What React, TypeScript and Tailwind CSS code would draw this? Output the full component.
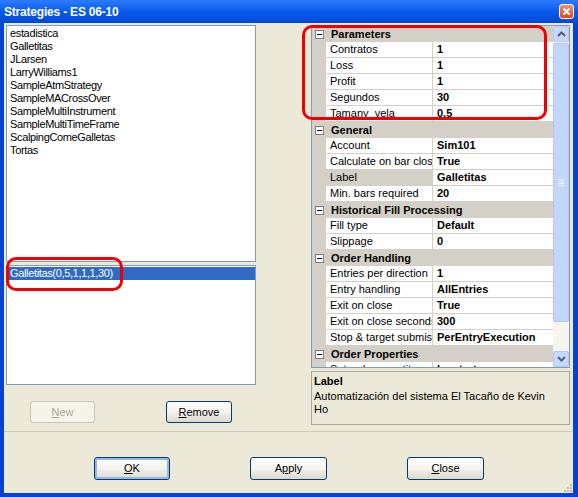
import React from "react";

type GridRow =
  | { kind: "cat"; label: string }
  | { kind: "prop"; name: string; value: string; selected?: boolean };

const strategies = [
  "estadistica",
  "Galletitas",
  "JLarsen",
  "LarryWilliams1",
  "SampleAtmStrategy",
  "SampleMACrossOver",
  "SampleMultiInstrument",
  "SampleMultiTimeFrame",
  "ScalpingComeGalletas",
  "Tortas",
];

const rows: GridRow[] = [
  { kind: "cat", label: "Parameters" },
  { kind: "prop", name: "Contratos", value: "1" },
  { kind: "prop", name: "Loss", value: "1" },
  { kind: "prop", name: "Profit", value: "1" },
  { kind: "prop", name: "Segundos", value: "30" },
  { kind: "prop", name: "Tamany_vela", value: "0,5" },
  { kind: "cat", label: "General" },
  { kind: "prop", name: "Account", value: "Sim101" },
  { kind: "prop", name: "Calculate on bar close", value: "True" },
  { kind: "prop", name: "Label", value: "Galletitas", selected: true },
  { kind: "prop", name: "Min. bars required", value: "20" },
  { kind: "cat", label: "Historical Fill Processing" },
  { kind: "prop", name: "Fill type", value: "Default" },
  { kind: "prop", name: "Slippage", value: "0" },
  { kind: "cat", label: "Order Handling" },
  { kind: "prop", name: "Entries per direction", value: "1" },
  { kind: "prop", name: "Entry handling", value: "AllEntries" },
  { kind: "prop", name: "Exit on close", value: "True" },
  { kind: "prop", name: "Exit on close seconds", value: "300" },
  { kind: "prop", name: "Stop & target submission", value: "PerEntryExecution" },
  { kind: "cat", label: "Order Properties" },
  { kind: "prop", name: "Set order quantity", value: "by strategy" },
];

function MinusBox() {
  return (
    <div className="ml-[3px] flex h-[9px] w-[9px] items-center justify-center border border-[#808080] bg-white">
      <div className="h-[1px] w-[5px] bg-black" />
    </div>
  );
}

function Chevron({ up }: { up?: boolean }) {
  return (
    <svg width="9" height="6" viewBox="0 0 9 6">
      <path
        d={up ? "M1 5 L4.5 1.5 L8 5" : "M1 1 L4.5 4.5 L8 1"}
        fill="none"
        stroke="#4D6185"
        strokeWidth="2"
      />
    </svg>
  );
}

function ScrollButton({ up }: { up?: boolean }) {
  return (
    <div className="flex h-[16px] w-[16px] items-center justify-center rounded-[2px] border border-[#B4C8F6] bg-[#C8D7FC]">
      <Chevron up={up} />
    </div>
  );
}

function Scrollbar() {
  return (
    <div className="flex w-[16px] flex-col bg-[#F6F5F0]">
      <ScrollButton up />
      <div className="flex-1 pt-[1px]">
        <div className="flex h-[279px] flex-col items-center justify-center gap-[1px] rounded-[2px] border border-[#B4C8F6] bg-[#C4D5FC]">
          <div className="h-[1px] w-[6px] bg-[#EEF4FE]" />
          <div className="h-[1px] w-[6px] bg-[#EEF4FE]" />
          <div className="h-[1px] w-[6px] bg-[#EEF4FE]" />
          <div className="h-[1px] w-[6px] bg-[#EEF4FE]" />
        </div>
      </div>
      <ScrollButton />
    </div>
  );
}

function PropertyGrid() {
  return (
    <div className="flex h-[343px] w-[259px] border border-[#7F9DB9] bg-white">
      <div className="w-[241px] overflow-hidden">
        {rows.map((row, i) =>
          row.kind === "cat" ? (
            <div key={i} className="flex h-[16px] items-center bg-[#D4D0C8]">
              <div className="w-[14px]">
                <MinusBox />
              </div>
              <div className="pl-[5px] font-bold whitespace-nowrap">{row.label}</div>
            </div>
          ) : (
            <div key={i} className="flex h-[16px]">
              <div className="w-[14px] bg-[#D4D0C8]" />
              <div
                className={
                  "w-[107px] overflow-hidden border-r border-b border-[#D4D0C8] pl-[4px] leading-[15px] whitespace-nowrap " +
                  (row.selected ? "bg-[#D4D0C8]" : "bg-white")
                }
              >
                {row.name}
              </div>
              <div className="w-[120px] overflow-hidden border-b border-[#D4D0C8] bg-white pl-[4px] leading-[15px] font-bold whitespace-nowrap">
                {row.value}
              </div>
            </div>
          )
        )}
      </div>
      <Scrollbar />
    </div>
  );
}

function XPButton({
  children,
  className = "",
  disabled,
  focused,
}: {
  children: React.ReactNode;
  className?: string;
  disabled?: boolean;
  focused?: boolean;
}) {
  if (disabled) {
    return (
      <div
        className={
          "flex items-center justify-center rounded-[3px] border border-[#C9C7BA] bg-[#F5F4EA] text-[#ACA899] " +
          className
        }
      >
        {children}
      </div>
    );
  }
  return (
    <div
      className={
        "flex items-center justify-center rounded-[3px] border border-[#003C74] bg-gradient-to-b from-white via-[#F4F3EE] to-[#DCD8CC] text-black " +
        (focused ? "shadow-[inset_0_0_0_2px_#98B6EA] " : "") +
        className
      }
    >
      {children}
    </div>
  );
}

export default function App() {
  return (
    <div className="relative flex h-[497px] w-[578px] flex-col bg-[#0842D0] font-['Liberation_Sans',Arial,sans-serif] text-[11px] text-black">
      {/* title bar */}
      <div className="flex h-[23px] items-center justify-between bg-gradient-to-b from-[#2C7BFF] via-[#0A5BEB] to-[#0048D8] pr-[4px] pl-[4px]">
        <span className="text-[12px] font-bold tracking-[-0.2px] text-white">
          Strategies - ES 06-10
        </span>
        <div className="flex h-[15px] w-[15px] items-center justify-center rounded-[3px] border border-white bg-gradient-to-b from-[#F0906C] to-[#D8471F]">
          <svg width="9" height="9" viewBox="0 0 9 9">
            <path d="M1.5 1.5 L7.5 7.5 M7.5 1.5 L1.5 7.5" stroke="white" strokeWidth="2" />
          </svg>
        </div>
      </div>

      {/* client */}
      <div className="flex flex-1 pr-[5px] pb-[4px] pl-[4px]">
        <div className="relative flex flex-1 flex-col bg-[#ECE9D8]">
          <div className="flex pt-[2px]">
            {/* left column */}
            <div className="ml-[2px] flex w-[250px] flex-col">
              <div className="h-[237px] border border-[#7F9DB9] bg-white pt-[1px] pl-[3px] tracking-[-0.35px]">
                {strategies.map((s) => (
                  <div key={s} className="h-[13px] leading-[13px] whitespace-nowrap">
                    {s}
                  </div>
                ))}
              </div>
              <div className="mt-[3px] h-[120px] border border-[#7F9DB9] bg-white pt-[1px]">
                <div className="h-[13px] bg-[#316AC5] pl-[3px] leading-[13px] tracking-[-0.35px] text-white">
                  Galletitas(0,5,1,1,1,30)
                </div>
              </div>
              <div className="mt-[16px] flex">
                <XPButton disabled className="ml-[24px] h-[22px] w-[65px]">
                  <span>
                    <span className="underline">N</span>ew
                  </span>
                </XPButton>
                <XPButton className="ml-[71px] h-[22px] w-[66px]">
                  <span>
                    <span className="underline">R</span>emove
                  </span>
                </XPButton>
              </div>
            </div>

            {/* right column */}
            <div className="ml-[55px] flex flex-col">
              <PropertyGrid />
              <div className="mt-[3px] h-[54px] w-[259px] border border-[#ACA899] pt-[3px] pl-[2px]">
                <div className="leading-[13px] font-bold">Label</div>
                <div className="mt-[2px] leading-[13px]">
                  Automatización del sistema El Tacaño de Kevin
                  <br />
                  Ho
                </div>
              </div>
            </div>
          </div>

          {/* separator */}
          <div className="mt-[6px] h-[2px] border-t border-[#D0CCBC] border-b-white" />

          {/* bottom buttons */}
          <div className="mt-[24px] flex pl-[90px]">
            <XPButton focused className="h-[23px] w-[76px]">
              <span>
                <span className="underline">O</span>K
              </span>
            </XPButton>
            <XPButton className="ml-[80px] h-[23px] w-[77px]">
              <span>
                A<span className="underline">p</span>ply
              </span>
            </XPButton>
            <XPButton className="ml-[80px] h-[23px] w-[77px]">
              <span>
                <span className="underline">C</span>lose
              </span>
            </XPButton>
          </div>

          {/* resize grip */}
          <svg className="absolute right-[1px] bottom-[1px]" width="10" height="10" viewBox="0 0 10 10">
            {[
              [8, 2],
              [8, 5],
              [5, 5],
              [8, 8],
              [5, 8],
              [2, 8],
            ].map(([x, y], i) => (
              <rect key={i} x={x} y={y} width="2" height="2" fill="#C1BDAE" />
            ))}
          </svg>
        </div>
      </div>

      {/* red annotations */}
      <div className="pointer-events-none absolute top-[25px] left-[302px] h-[95px] w-[245px] rounded-[10px] border-[3px] border-[#F00000]" />
      <div className="pointer-events-none absolute top-[257px] left-[6px] h-[34px] w-[117px] rounded-[10px] border-[3px] border-[#F00000]" />
    </div>
  );
}
